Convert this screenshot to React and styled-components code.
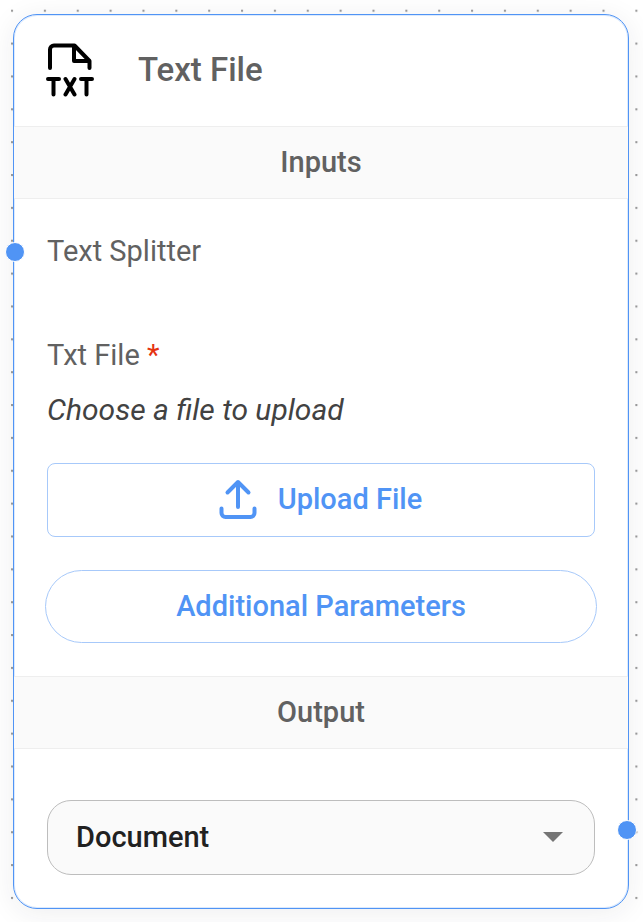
import React, { useState } from "react";
import styled, { createGlobalStyle } from "styled-components";

function TxtFileIcon() {
  return (
    <svg width="48" height="54" viewBox="0 0 48 54" fill="none" stroke="#000" strokeWidth="4" strokeLinecap="round" strokeLinejoin="round" aria-hidden="true">
      <path d="M4 25V6.500a4 4 0 0 1 4-4h20.500l15 15.500v7" />
      <path d="M28 3v15h15" />
      <path d="M2 36h11M7.500 36v15.500M35 36h11M40.500 36v15.500" />
      <path d="M19.500 36l9 15.500M28.500 36l-9 15.500" />
    </svg>
  );
}

function UploadIcon() {
  return (
    <svg width="40" height="40" viewBox="0 0 40 40" fill="none" stroke="currentColor" strokeWidth="4" strokeLinecap="round" strokeLinejoin="round" aria-hidden="true">
      <path d="M3.500 29.500v4.500a4 4 0 0 0 4 4h25a4 4 0 0 0 4-4v-4.500" />
      <path d="M9.500 13.500L20 3l10.500 10.500M20 3v25" />
    </svg>
  );
}

function DotGrid() {
  return (
    <Dots aria-hidden="true">
      <pattern id="dots" x="11" y="9.700" width="32.860" height="32.860" patternUnits="userSpaceOnUse">
        <circle cx="1" cy="1" r="1.200" fill="#999" />
      </pattern>
      <rect width="100%" height="100%" fill="url(#dots)" />
    </Dots>
  );
}

function App() {
  const [output, setOutput] = useState("document");

  return (
    <Canvas>
      <GlobalStyle />
      <DotGrid />
      <Node>
        <Header>
          <TxtFileIcon />
          <Title>Text File</Title>
        </Header>
        <SectionTitle>Inputs</SectionTitle>
        <Anchor>
          <Handle $side="left" />
          <Label>Text Splitter</Label>
        </Anchor>
        <Field>
          <Label id="txt-file">
            Txt File <Required>*</Required>
          </Label>
          <FileName>Choose a file to upload</FileName>
          <UploadButton type="button" aria-describedby="txt-file">
            <UploadIcon />
            Upload File
          </UploadButton>
        </Field>
        <Actions>
          <PillButton type="button">Additional Parameters</PillButton>
        </Actions>
        <SectionTitle>Output</SectionTitle>
        <OutputRow>
          <Handle $side="right" />
          <SelectWrap>
            <Select aria-label="Output" value={output} onChange={(e) => setOutput(e.target.value)}>
              <option value="document">Document</option>
              <option value="text">Text</option>
            </Select>
            <Caret viewBox="0 0 20 10" aria-hidden="true">
              <path d="M0 0h20L10 10z" fill="#757575" />
            </Caret>
          </SelectWrap>
        </OutputRow>
      </Node>
    </Canvas>
  );
}

export default App;

const GlobalStyle = createGlobalStyle`
  * {
    box-sizing: border-box;
  }
  body {
    margin: 0;
    background: #fff;
    font-family: Roboto, sans-serif;
  }
  h1, h2, p {
    margin: 0;
  }
  button, select {
    font-family: inherit;
    cursor: pointer;
  }
`;

const Canvas = styled.main`
  position: relative;
  min-height: 100vh;
  padding: 14px 14px 13px 13px;
  overflow: hidden;
`;

const Dots = styled.svg`
  position: absolute;
  inset: 0;
  width: 100%;
  height: 100%;
`;

const Node = styled.section`
  position: relative;
  background: #fff;
  border: 1px solid #5094f5;
  border-radius: 24px;
  box-shadow: 0 4px 28px rgba(32, 40, 45, 0.08), inset 0 0 0 1px rgba(80, 148, 245, 0.2);
`;

const Header = styled.header`
  display: flex;
  align-items: center;
  gap: 44px;
  height: 111px;
  padding: 0 32px 2px;
`;

const Title = styled.h1`
  font-size: 33px;
  font-weight: 500;
  line-height: 40px;
  color: #616161;
`;

const SectionTitle = styled.h2`
  padding: 15px 16px 16px;
  border: 1px solid #eee;
  border-width: 1px 0;
  background: #fafafa;
  color: #616161;
  font-size: 29px;
  font-weight: 500;
  line-height: 40px;
  text-align: center;
`;

const Anchor = styled.div`
  position: relative;
  padding: 32px 33px;
`;

const Handle = styled.span`
  position: absolute;
  top: 50%;
  ${({ $side }) => $side}: -9px;
  width: 20px;
  height: 20px;
  margin-top: -9px;
  border: 1px solid #fff;
  border-radius: 50%;
  background: #5094f5;
`;

const Field = styled.div`
  padding: 32px 33px 0;
`;

const Label = styled.p`
  color: #616161;
  font-size: 29px;
  line-height: 40px;
`;

const Required = styled.span`
  color: #e53210;
`;

const FileName = styled.p`
  margin-top: 15px;
  color: #424242;
  font-size: 30px;
  font-style: italic;
  line-height: 40px;
`;

const UploadButton = styled.button`
  display: flex;
  align-items: center;
  justify-content: center;
  gap: 20px;
  width: 100%;
  height: 74px;
  margin-top: 33px;
  padding: 0 2px 2px 0;
  border: 1px solid #a7c9fa;
  border-radius: 8px;
  background: #fff;
  color: #5094f5;
  font-size: 29px;
  font-weight: 500;
`;

const Actions = styled.div`
  padding: 33px 31px;
`;

const PillButton = styled.button`
  display: block;
  width: 100%;
  height: 73px;
  padding: 0 0 2px;
  border: 1px solid #a7c9fa;
  border-radius: 37px;
  background: #fff;
  color: #5094f5;
  font-size: 29px;
  font-weight: 500;
`;

const OutputRow = styled.div`
  position: relative;
  padding: 51px 33px 33px;
`;

const SelectWrap = styled.div`
  position: relative;
`;

const Select = styled.select`
  display: block;
  width: 100%;
  height: 75px;
  padding: 0 64px 2px 28px;
  appearance: none;
  border: 1px solid #bdbdbd;
  border-radius: 24px;
  background: #fafafa;
  color: #212121;
  font-size: 29px;
  font-weight: 500;
`;

const Caret = styled.svg`
  position: absolute;
  top: 32px;
  right: 32px;
  width: 20px;
  height: 10px;
  pointer-events: none;
`;
